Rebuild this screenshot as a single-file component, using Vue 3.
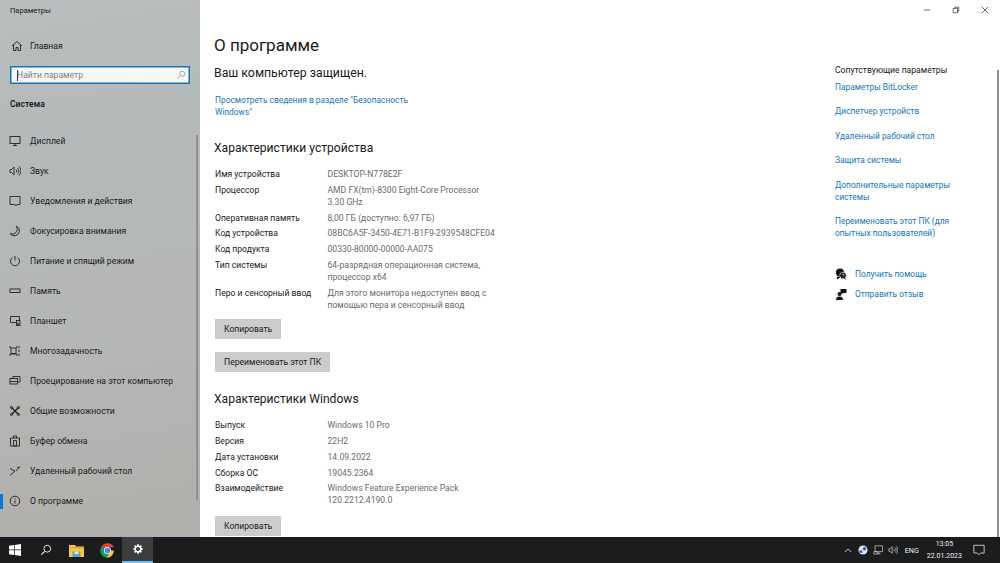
<script setup>
const nav = [
  ['Дисплей', 'display'], ['Звук', 'sound'], ['Уведомления и действия', 'notify'],
  ['Фокусировка внимания', 'moon'], ['Питание и спящий режим', 'power'], ['Память', 'storage'],
  ['Планшет', 'tablet'], ['Многозадачность', 'multi'], ['Проецирование на этот компьютер', 'project'],
  ['Общие возможности', 'shared'], ['Буфер обмена', 'clip'], ['Удаленный рабочий стол', 'remote'],
  ['О программе', 'info']
]
const device = [
  ['Имя устройства', ['DESKTOP-N778E2F']],
  ['Процессор', ['AMD FX(tm)-8300 Eight-Core Processor', '3.30 GHz']],
  ['Оперативная память', ['8,00 ГБ (доступно: 6,97 ГБ)']],
  ['Код устройства', ['08BC6A5F-3450-4E71-B1F9-2939548CFE04']],
  ['Код продукта', ['00330-80000-00000-AA075']],
  ['Тип системы', ['64-разрядная операционная система,', 'процессор x64']],
  ['Перо и сенсорный ввод', ['Для этого монитора недоступен ввод с', 'помощью пера и сенсорный ввод']]
]
const win = [
  ['Выпуск', ['Windows 10 Pro']],
  ['Версия', ['22H2']],
  ['Дата установки', ['14.09.2022']],
  ['Сборка ОС', ['19045.2364']],
  ['Взаимодействие', ['Windows Feature Experience Pack', '120.2212.4190.0']]
]
const related = [
  ['Параметры BitLocker'], ['Диспетчер устройств'], ['Удаленный рабочий стол'], ['Защита системы'],
  ['Дополнительные параметры', 'системы'], ['Переименовать этот ПК (для', 'опытных пользователей)']
]
</script>

<template>
  <div class="screen">
    <div class="window">
      <aside class="sidebar">
        <div class="app-title">Параметры</div>
        <div class="home">
          <svg class="ico" viewBox="0 0 12 12"><path d="M1 6 6 1.500 11 6M2.500 5v5.500h2.500V7.500h2v3h2.500V5" /></svg>
          <span>Главная</span>
        </div>
        <div class="search">
          <span class="caret"></span><span class="ph">Найти параметр</span>
          <svg class="search-ico" viewBox="0 0 12 12"><circle cx="7.500" cy="4.500" r="3" /><path d="M5.300 6.700 1.500 10.500" /></svg>
        </div>
        <div class="section">Система</div>
        <nav class="nav">
          <div v-for="item in nav" :key="item[0]" class="nav-item" :class="{ active: item[1] === 'info' }">
            <svg class="ico" viewBox="0 0 12 12">
              <template v-if="item[1] === 'display'"><rect x="1" y="1.500" width="10" height="7" /><path d="M4 10.500h4M6 8.500v2" /></template>
              <template v-else-if="item[1] === 'sound'"><path d="M1 4.500v3h1.500L5 10V2L2.500 4.500zM7 4.500a2 2 0 0 1 0 3M8.500 3a4 4 0 0 1 0 6M10 1.500a6 6 0 0 1 0 9" /></template>
              <template v-else-if="item[1] === 'notify'"><path d="M1 1.500h10v8H8l-1 1.500-1-1.500H1z" /></template>
              <template v-else-if="item[1] === 'moon'"><path d="M7 1a5 5 0 0 1-.500 7A5 5 0 0 1 1 8.500 5.200 5.200 0 0 0 10.500 6 5 5 0 0 0 7 1z" /></template>
              <template v-else-if="item[1] === 'power'"><path d="M3.500 2.500a4.500 4.500 0 1 0 5 0M6 1v4.500" /></template>
              <template v-else-if="item[1] === 'storage'"><rect x="1" y="4" width="10" height="3.500" /></template>
              <template v-else-if="item[1] === 'tablet'"><path d="M7.500 7.500H1.500V1.500h9V5" /><rect x="7.500" y="5.500" width="3.500" height="5" /><circle cx="9.200" cy="8.800" r=".8" /></template>
              <template v-else-if="item[1] === 'multi'"><path d="M1 1v2h7V1M1 11V9h7v2M2 3.500v5h5v-5M10 1v2M10 4.500v2.500M10 8.500V11" /></template>
              <template v-else-if="item[1] === 'project'"><path d="M4 3.500V1.500h7V7H8.500" /><rect x="1" y="3.500" width="7.500" height="5.500" /><path d="M1 6.500h7.500" /></template>
              <template v-else-if="item[1] === 'shared'"><path d="M2.500 2.500l7 7M9.500 2.500l-7 7" stroke-width="1.400" /><circle cx="2.500" cy="2.500" r="1.100" /><circle cx="9.500" cy="2.500" r="1.100" /><circle cx="2.500" cy="9.500" r="1.100" /><circle cx="9.500" cy="9.500" r="1.100" /></template>
              <template v-else-if="item[1] === 'clip'"><path d="M1.500 3h9v8h-9zM4.500 3V1h3v2M4.500 5.500h3v5.500h-3z" /></template>
              <template v-else-if="item[1] === 'remote'"><path d="M1 10.500 6 6 1 3.500M7 6l4-4.500M8 2l2.500 1" /></template>
              <template v-else><circle cx="6" cy="6" r="4.800" /><path d="M6 5.200v3.300M6 3.300v1" /></template>
            </svg>
            <span>{{ item[0] }}</span>
          </div>
        </nav>
        <div class="side-scroll"></div>
      </aside>

      <main class="main">
        <div class="win-controls">
          <svg viewBox="0 0 10 10"><path d="M1 5h8" /></svg>
          <svg viewBox="0 0 10 10"><path d="M1.500 3h5.500v5.500H1.500zM3.500 3V1.500h5v5H7" /></svg>
          <svg viewBox="0 0 10 10"><path d="M1 1l8 8M9 1 1 9" /></svg>
        </div>
        <div class="body">
          <section class="content">
            <h1>О программе</h1>
            <div class="protected">Ваш компьютер защищен.</div>
            <a class="link security">Просмотреть сведения в разделе "Безопасность<br />Windows"</a>
            <h2 class="h-device">Характеристики устройства</h2>
            <div v-for="r in device" :key="r[0]" class="row">
              <div class="k">{{ r[0] }}</div>
              <div class="v"><div v-for="l in r[1]" :key="l">{{ l }}</div></div>
            </div>
            <button class="btn first">Копировать</button>
            <button class="btn second">Переименовать этот ПК</button>
            <h2 class="h-win">Характеристики Windows</h2>
            <div v-for="r in win" :key="r[0]" class="row">
              <div class="k">{{ r[0] }}</div>
              <div class="v"><div v-for="l in r[1]" :key="l">{{ l }}</div></div>
            </div>
            <button class="btn first last">Копировать</button>
          </section>
          <section class="related">
            <div class="rel-title">Сопутствующие параметры</div>
            <a v-for="r in related" :key="r[0]" class="link rel-link"><div v-for="l in r" :key="l">{{ l }}</div></a>
            <div class="help first-help">
              <svg viewBox="0 0 12 12"><circle cx="5" cy="4.500" r="4" fill="#111" /><circle cx="8" cy="7.500" r="3.300" fill="#111" stroke="#fff" stroke-width=".6" /><path d="M3 8.500 2 11l3-2M9.500 10l1 1.500" stroke="#111" fill="#111" /><path d="M7.200 6.700a.9.9 0 1 1 1.200 1.100l-.3.500" stroke="#fff" stroke-width=".7" fill="none" /></svg>
              <a class="link">Получить помощь</a>
            </div>
            <div class="help">
              <svg viewBox="0 0 12 12"><circle cx="4.500" cy="6" r="2" fill="#111" /><path d="M1 12c0-2.500 1.500-3.500 3.500-3.500S8 9.500 8 12z" fill="#111" /><path d="M5.500 1h6v4H8L6.500 6.500V5h-1z" fill="#111" /></svg>
              <a class="link">Отправить отзыв</a>
            </div>
          </section>
          <div class="main-scroll"></div>
        </div>
      </main>
    </div>

    <footer class="taskbar">
      <div class="tb-left">
        <div class="tb-btn">
          <svg class="w14" viewBox="0 0 12 12"><path d="M0 1.700 5 1v4.600H0zM5.700.9 12 0v5.600H5.700zM0 6.300h5v4.700l-5-.7zM5.700 6.300H12V12l-6.300-.9z" fill="#fff" /></svg>
        </div>
        <div class="tb-btn">
          <svg class="w14" viewBox="0 0 14 14"><circle cx="8.500" cy="5.500" r="4" fill="none" stroke="#e8e8e8" stroke-width="1.100" /><path d="M5.500 8.500 1.500 12.500" stroke="#e8e8e8" stroke-width="1.300" /></svg>
        </div>
        <div class="tb-btn">
          <svg class="w15" viewBox="0 0 15 13"><path d="M0 1h6l1 1.500h8V13H0z" fill="#f5c84c" /><path d="M0 3h15v1.500H0z" fill="#e7a92b" /><path d="M3.500 7.500h8V13h-8z" fill="#5aa6c9" /><path d="M5.500 7.500h4V10h-4z" fill="#f2e6b0" /></svg>
        </div>
        <div class="tb-btn">
          <svg class="w16" viewBox="0 0 16 16">
            <path d="M8 8 1.300 4.200A7.700 7.700 0 0 1 14.900 4.500H8z" fill="#db4437" />
            <path d="M8 8 1.300 4.200A7.700 7.700 0 0 0 7 15.700L10.500 9z" fill="#0f9d58" />
            <path d="M8 8h6.900A7.700 7.700 0 0 1 7 15.700L10.500 9z" fill="#fbc02d" />
            <circle cx="8" cy="8" r="3.800" fill="#fff" /><circle cx="8" cy="8" r="3" fill="#4285f4" />
          </svg>
        </div>
        <div class="tb-btn active">
          <svg class="w14" viewBox="0 0 14 14"><path d="M7 1.500v2M7 10.500v2M1.500 7h2M10.500 7h2M3.100 3.100l1.400 1.400M9.500 9.500l1.400 1.400M3.100 10.900l1.400-1.400M9.500 4.500l1.400-1.400" stroke="#fff" stroke-width="2" /><circle cx="7" cy="7" r="3.300" fill="none" stroke="#fff" stroke-width="1.800" /></svg>
        </div>
      </div>
      <div class="tray">
        <svg class="t-chev" viewBox="0 0 10 6"><path d="M1 5 5 1l4 4" /></svg>
        <svg class="t-ico" viewBox="0 0 12 12"><circle cx="6" cy="6" r="5.500" fill="#d8e2f0" /><circle cx="7.800" cy="4.500" r="2" fill="#2a5c9c" /><circle cx="3.500" cy="8" r="1.700" fill="#2a5c9c" /></svg>
        <svg class="t-ico line" viewBox="0 0 12 12"><path d="M2.500 1h9v7h-9zM1 8v3h4V8zM7 8v2.500M5 10.500h4" /></svg>
        <svg class="t-ico line" viewBox="0 0 12 12"><path d="M1 4.500v3h1.500L5 10V2L2.500 4.500zM7 4.500a2 2 0 0 1 0 3M8.500 3a4 4 0 0 1 0 6M10 1.500a6 6 0 0 1 0 9" /></svg>
        <span class="lang">ENG</span>
        <div class="clock"><div>13:05</div><div>22.01.2023</div></div>
        <svg class="t-note" viewBox="0 0 14 14"><path d="M1 1.500h12v9H9l-2 2-2-2H1z" /></svg>
      </div>
    </footer>
  </div>
</template>

<style scoped>
.screen { width: 1000px; height: 563px; display: flex; flex-direction: column; overflow: hidden; font-family: Roboto, "Open Sans", sans-serif; color: #1a1a1a; background: #fff; }
.window { flex: 1; display: flex; min-height: 0; }
.sidebar { position: relative; width: 200px; flex: none; background: linear-gradient(170deg, #b9bdbd 0%, #b4bab9 25%, #b5b7b6 60%, #b1afac 100%); }
.app-title { font-size: 7.500px; line-height: 11px; padding: 5px 0 0 10px; }
.home { display: flex; align-items: center; gap: 7px; height: 20px; margin-top: 20px; padding-left: 11px; font-size: 8.600px; }
.ico { width: 12px; height: 12px; flex: none; fill: none; stroke: #222; stroke-width: .9; }
.search { position: relative; display: flex; align-items: center; height: 16px; margin: 10px 10px 0 10px; background: #f7f8f8; border: 1px solid #1673b8; box-shadow: 0 0 0 .5px #1673b8 inset; box-sizing: content-box; width: 178px; }
.caret { width: 1px; height: 11px; background: #333; margin-left: 6px; }
.ph { font-size: 8.600px; color: #7e8284; margin-left: -1px; }
.search-ico { position: absolute; right: 3px; top: 3px; width: 10px; height: 10px; fill: none; stroke: #8c9092; stroke-width: .9; }
.section { font-size: 8.600px; font-weight: 600; margin-top: 13px; padding-left: 10px; line-height: 14px; }
.nav { margin-top: 15px; }
.nav-item { position: relative; display: flex; align-items: center; gap: 9px; height: 30px; padding-left: 9px; font-size: 8.600px; }
.nav-item.active::before { content: ""; position: absolute; left: 0; top: 8px; width: 3px; height: 15px; background: #0b78d4; }
.side-scroll { position: absolute; right: 2px; top: 135px; bottom: 37px; width: 2px; background: #8f8f8f; }
.main { flex: 1; min-width: 0; display: flex; flex-direction: column; background: #fff; }
.win-controls { display: flex; justify-content: flex-end; gap: 21px; height: 20px; padding: 6px 11px 0 0; box-sizing: border-box; }
.win-controls svg { width: 8px; height: 8px; fill: none; stroke: #333; stroke-width: .9; }
.body { position: relative; flex: 1; display: flex; min-height: 0; overflow: hidden; }
.content { width: 635px; padding-left: 15px; box-sizing: border-box; }
h1 { font-size: 17px; font-weight: 400; line-height: 22px; margin: 14px 0 0 -1px; }
.protected { font-size: 12.300px; line-height: 16px; margin: 9px 0 0 -1px; }
.link { color: #1976b4; font-size: 8.400px; line-height: 12px; }
.security { display: block; margin-top: 13px; }
h2 { font-size: 12.100px; font-weight: 400; line-height: 16px; margin: 0 0 0 -1px; }
.h-device { margin-top: 22px; margin-bottom: 12px; }
.h-win { margin-top: 19px; margin-bottom: 12px; }
.row { display: flex; font-size: 8.600px; line-height: 12px; margin-bottom: 3.800px; }
.k { width: 112.500px; flex: none; }
.v { color: #6b6b6b; }
.btn { display: block; height: 20px; padding: 0 9px; border: 0; background: #cccccc; color: #1a1a1a; font: inherit; font-size: 8.600px; }
.btn.first { margin-top: 8.500px; }
.btn.second { margin-top: 13px; }
.btn.last { margin-top: 10px; }
.related { width: 150px; padding-top: 44px; }
.rel-title { font-size: 8.600px; line-height: 12px; }
.rel-link { display: block; margin-top: 12.400px; }
.rel-title + .rel-link { margin-top: 5px; }
.help { display: flex; align-items: center; gap: 8px; height: 12px; margin-top: 8px; }
.first-help { margin-top: 29px; }
.help svg { width: 12px; height: 12px; flex: none; }
.main-scroll { position: absolute; right: 1px; top: 50px; bottom: 0; width: 2px; background: #8f8f8f; }
.taskbar { height: 26px; flex: none; background: #1b1c1e; display: flex; justify-content: space-between; color: #eee; }
.tb-left { display: flex; }
.tb-btn { width: 30.600px; height: 26px; display: flex; align-items: center; justify-content: center; box-sizing: border-box; }
.tb-btn.active { background: #3c3d3f; border-bottom: 2px solid #76b9ed; }
.w14 { width: 12px; height: 12px; }
.w15 { width: 15px; height: 13px; }
.w16 { width: 15px; height: 15px; }
.tray { display: flex; align-items: center; padding-right: 15px; }
.t-chev { width: 8px; height: 5px; fill: none; stroke: #eee; stroke-width: 1; margin-right: 6px; }
.t-ico { width: 10px; height: 10px; margin-right: 5px; }
.line { fill: none; stroke: #ddd; stroke-width: .8; }
.lang { font-size: 7.200px; margin: 0 8px 0 2px; }
.clock { font-size: 7px; line-height: 12px; text-align: center; margin-right: 11px; }
.t-note { width: 12px; height: 12px; fill: none; stroke: #eee; stroke-width: .9; }
</style>
